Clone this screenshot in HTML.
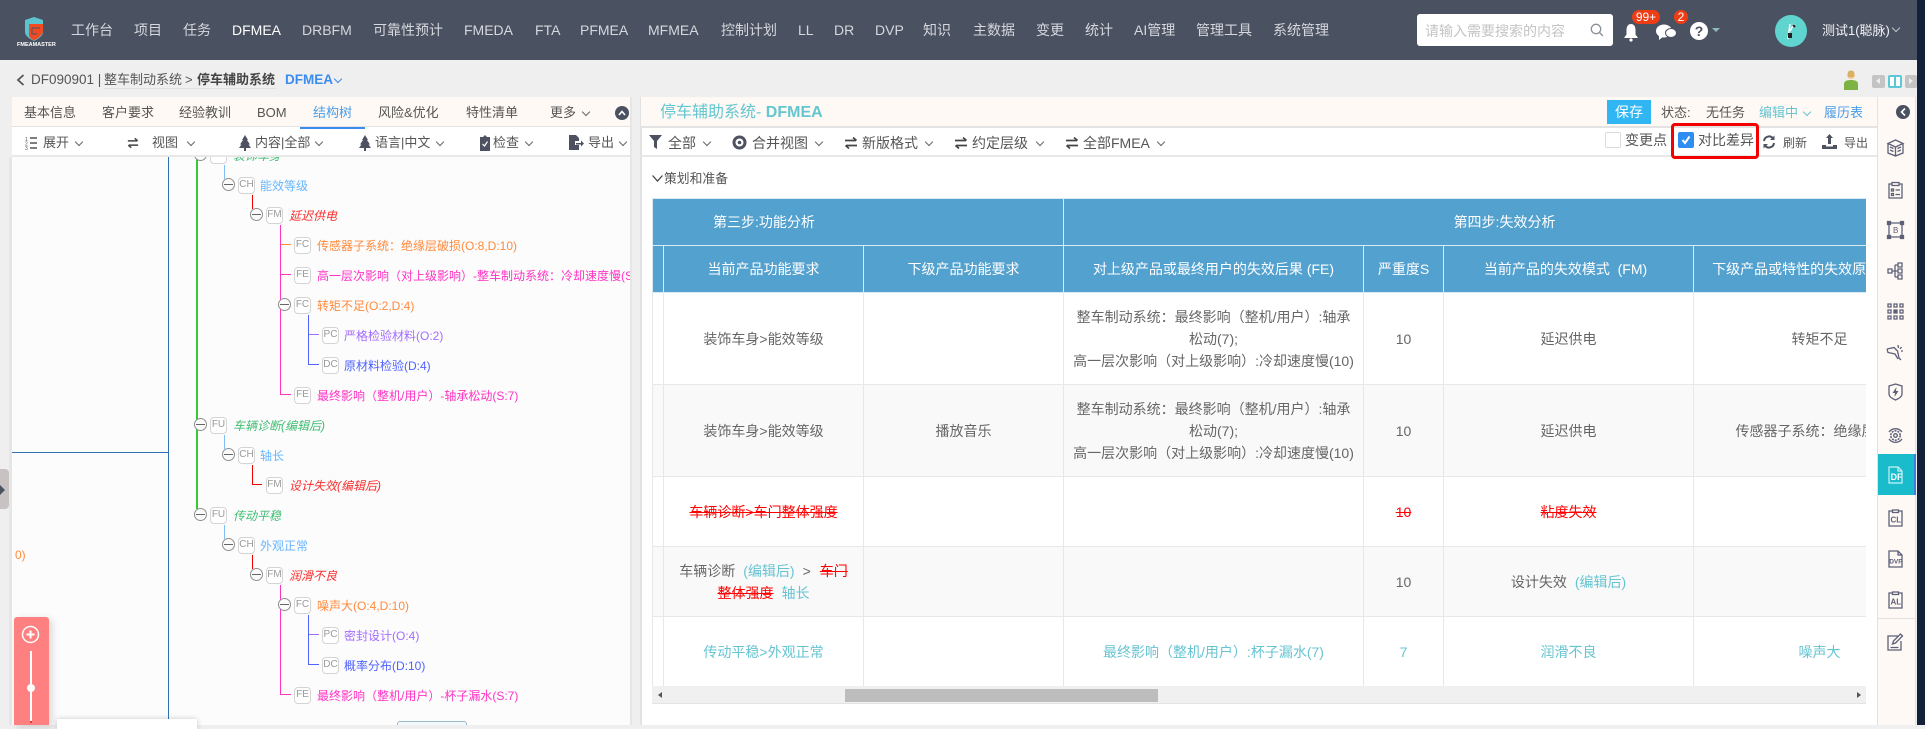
<!DOCTYPE html>
<html lang="zh-CN"><head><meta charset="utf-8"><title>DFMEA</title>
<style>
*{box-sizing:border-box}
html,body{margin:0;padding:0;width:1925px;height:725px;overflow:hidden;background:#efefef;font-family:"Liberation Sans","Noto Sans CJK SC",sans-serif;color:#555}
.a{position:absolute}
.t{position:absolute;white-space:nowrap;line-height:20px;font-size:13px}
.n{font-size:14px;color:#d5d8de;top:20px}
.ch{position:absolute;width:6px;height:6px;border-right:1px solid #666;border-bottom:1px solid #666;transform:rotate(45deg)}
svg{position:absolute;overflow:visible}
.b{position:absolute;width:17px;height:17px;margin-top:1px;border:1.5px solid #d4d4d4;border-radius:4px;background:#fff;font-size:10px;line-height:14px;text-align:center;color:#999}
.c{position:absolute;width:13px;height:13px;border:1.5px solid #8f8f8f;border-radius:50%;background:#fbfbfb}
.c:after{content:"";position:absolute;left:1px;right:1px;top:4.5px;height:1px;background:#666}
.l{position:absolute}
.x{font-size:12px}
.fu{color:#3fbd72;font-style:italic}.chh{color:#69b6ff}.fm{color:#fa2f2f;font-style:italic}.fc{color:#ff8a3c}.fe{color:#ff33c4}.pc{color:#a46cff}.dc{color:#4f62ff}
.tb{font-size:14px}
table{position:absolute;left:0;top:0;border-collapse:collapse;table-layout:fixed;width:1293px;font-size:14px;color:#666}
td,th{border:1px solid #e8e8e8;text-align:center;vertical-align:middle;padding:0;line-height:22px;font-weight:400;overflow:hidden;white-space:nowrap}
th{background:#53a1cf;color:#fff;border-color:#dbe9f2}
.z td{background:#f9f9f9}
.r{color:#f00;text-decoration:line-through}
.g{color:#66c4d2}
svg.ic{fill:none;stroke:#5d6078;stroke-width:1.3}
</style></head><body>
<svg width="0" height="0" style="position:absolute"><defs>
<symbol id="swap" viewBox="0 0 14 14"><path d="M1 4.500H12M9 1.500L12.500 4.500M13 9.500H2M5 12.500L1.500 9.500" fill="none" stroke="#444" stroke-width="1.700"/></symbol>
<symbol id="pine" viewBox="0 0 12 16"><path d="M6 0L9 5H8L11 9.500H9.500L12 13H7V16H5V13H0L2.500 9.500H1L4 5H3Z" fill="#4d5160"/></symbol>
</defs></svg>

<!-- header -->
<div class="a" style="left:0;top:0;width:1917px;height:60px;background:#4a5160"></div>
<div class="a" style="left:1917px;top:0;width:8px;height:725px;background:#13203a"></div>
<svg style="left:24px;top:17px" width="20" height="24" viewBox="0 0 20 24"><path d="M1 3L10 0L19 3V15C19 19 14 22 10 24C6 22 1 19 1 15Z" fill="#5dc3cf"/><path d="M5 7H19V14C19 18 14 21 10 23.500C8 22.500 6 21 5 19Z" fill="#ef4a22"/><path d="M8 11H16M8 11V17H13" fill="none" stroke="#4a5160" stroke-width="1"/></svg>
<svg style="left:17px;top:40px" width="34" height="7"><text x="0" y="6" font-size="5.500" font-weight="700" fill="#fff" font-family="Liberation Sans">FMEAMASTER</text></svg>
<div class="t n" style="left:71px">工作台</div><div class="t n" style="left:134px">项目</div><div class="t n" style="left:183px">任务</div>
<div class="t n" style="left:232px;color:#fff">DFMEA</div><div class="t n" style="left:302px">DRBFM</div><div class="t n" style="left:373px">可靠性预计</div>
<div class="t n" style="left:464px">FMEDA</div><div class="t n" style="left:535px">FTA</div><div class="t n" style="left:580px">PFMEA</div><div class="t n" style="left:648px">MFMEA</div>
<div class="t n" style="left:721px">控制计划</div><div class="t n" style="left:798px">LL</div><div class="t n" style="left:834px">DR</div><div class="t n" style="left:875px">DVP</div>
<div class="t n" style="left:923px">知识</div><div class="t n" style="left:973px">主数据</div><div class="t n" style="left:1036px">变更</div><div class="t n" style="left:1085px">统计</div>
<div class="t n" style="left:1134px">AI管理</div><div class="t n" style="left:1196px">管理工具</div><div class="t n" style="left:1273px">系统管理</div>

<div class="a" style="left:1417px;top:14px;width:196px;height:32px;background:#fff;border-radius:3px"></div>
<div class="t" style="left:1425px;top:21px;font-size:14px;color:#c4c4c4">请输入需要搜索的内容</div>
<svg style="left:1590px;top:23px" width="14" height="14" viewBox="0 0 14 14" fill="none" stroke="#8a8f98" stroke-width="1.300"><circle cx="6" cy="6" r="4.700"/><path d="M9.500 9.500L13 13"/></svg>
<svg style="left:1623px;top:23px" width="16" height="19" viewBox="0 0 16 19"><path d="M8 1C11 1 12.500 3.500 12.500 7V11.500L15 15H1L3.500 11.500V7C3.500 3.500 5 1 8 1Z" fill="#fff"/><circle cx="8" cy="17" r="1.600" fill="#fff"/></svg>
<div class="a" style="left:1632px;top:10px;width:28px;height:14px;border-radius:7px;background:#ee3c14;color:#fff;font-size:12px;line-height:14px;text-align:center">99+</div>
<svg style="left:1656px;top:24px" width="21" height="16" viewBox="0 0 21 16"><ellipse cx="8" cy="7" rx="8" ry="6.500" fill="#fff"/><path d="M3 11L3 16L8 12Z" fill="#fff"/><ellipse cx="15" cy="9" rx="5.500" ry="4.500" fill="#fff" stroke="#4a5160"/></svg>
<div class="a" style="left:1674px;top:10px;width:14px;height:14px;border-radius:50%;background:#ee3c14;color:#fff;font-size:12px;line-height:14px;text-align:center">2</div>
<div class="a" style="left:1690px;top:22px;width:18px;height:18px;border-radius:50%;background:#fff;color:#4a5160;font-size:14px;font-weight:700;line-height:18px;text-align:center">?</div>
<div class="a" style="left:1712px;top:28px;border-left:4px solid transparent;border-right:4px solid transparent;border-top:4px solid #8fb9bf"></div>
<div class="a" style="left:1775px;top:15px;width:32px;height:32px;border-radius:50%;background:#60d5d0"></div>
<svg style="left:1785px;top:21px" width="12" height="20" viewBox="0 0 12 20"><path d="M5 3L3 18M9 3L5 10" stroke="#fff" stroke-width="1.500"/><path d="M3 12H7V17H3Z" fill="#222"/><path d="M8 4L10 6" stroke="#222" stroke-width="2"/></svg>
<div class="t" style="left:1822px;top:21px;color:#f2f4f7">测试1(聪脉)</div>
<div class="ch" style="left:1893px;top:25px;border-color:#b7c9cf"></div>

<!-- breadcrumb -->
<svg style="left:16px;top:74px" width="9" height="12" viewBox="0 0 9 12" fill="none" stroke="#555" stroke-width="1.800"><path d="M7.500 1L2 6L7.500 11"/></svg>
<div class="t" style="left:31px;top:70px;font-size:13.500px">DF090901 |</div>
<div class="t" style="left:104px;top:70px">整车制动系统</div>
<div class="a" style="left:104px;top:88px;width:172px;height:1px;background:#e0e0e0"></div>
<div class="t" style="left:185px;top:70px">&gt;</div>
<div class="t" style="left:197px;top:70px;font-weight:700;color:#444">停车辅助系统</div>
<div class="t" style="left:285px;top:70px;font-weight:700;color:#3b8cf0;font-size:13.500px">DFMEA</div>
<div class="ch" style="left:335px;top:76px;border-color:#3b8cf0"></div>
<svg style="left:1843px;top:70px" width="16" height="20" viewBox="0 0 16 20"><circle cx="8" cy="5" r="4" fill="#f2c98a"/><path d="M5 2C6 0 10 0 11 2L11 7L5 7Z" fill="#d9b066"/><path d="M1 20V14C1 11 4 10 8 10C12 10 15 11 15 14V20Z" fill="#7cb342"/></svg>
<div class="a" style="left:1872px;top:75px;width:13px;height:13px;background:#c4c4c4;border-radius:2px"></div>
<div class="a" style="left:1876px;top:78px;border-right:4px solid #eee;border-top:3.500px solid transparent;border-bottom:3.500px solid transparent"></div>
<div class="a" style="left:1888px;top:75px;width:14px;height:13px;background:#5cc8d6;border-radius:2px;padding:2px"><div style="width:4px;height:9px;background:#fff;float:left"></div><div style="width:4px;height:9px;background:#fff;float:right"></div></div>
<div class="a" style="left:1905px;top:75px;width:12px;height:13px;background:#c4c4c4;border-radius:2px"></div>
<div class="a" style="left:1909px;top:78px;border-left:4px solid #eee;border-top:3.500px solid transparent;border-bottom:3.500px solid transparent"></div>

<!-- left panel -->
<div class="a" style="left:9px;top:157px;width:3px;height:568px;background:#e6e6e6"></div>
<div class="a" style="left:630px;top:97px;width:2px;height:628px;background:#e6e6e6"></div>
<div class="a" style="left:12px;top:97px;width:618px;height:628px;background:#fcfcfc"></div>
<div class="a" style="left:12px;top:97px;width:618px;height:30px;background:#fef9f4;border-bottom:1px solid #e3e3e3"></div>
<div class="a" style="left:12px;top:127px;width:618px;height:30px;background:#fff;border-bottom:2px solid #e8e8e8"></div>
<div class="t" style="left:24px;top:103px">基本信息</div><div class="t" style="left:102px;top:103px">客户要求</div><div class="t" style="left:179px;top:103px">经验教训</div>
<div class="t" style="left:257px;top:103px">BOM</div><div class="t" style="left:313px;top:103px;color:#4a9be8">结构树</div>
<div class="a" style="left:300px;top:127px;width:65px;height:2px;background:#3b8cf0"></div>
<div class="t" style="left:378px;top:103px">风险&amp;优化</div><div class="t" style="left:466px;top:103px">特性清单</div><div class="t" style="left:550px;top:103px">更多</div>
<div class="ch" style="left:583px;top:109px"></div>
<div class="a" style="left:615px;top:106px;width:14px;height:14px;border-radius:50%;background:#4a5160"></div>
<svg style="left:618px;top:110px" width="8" height="6" viewBox="0 0 8 6" fill="none" stroke="#fff" stroke-width="1.600"><path d="M1 5L4 1.500L7 5"/></svg>

<svg style="left:25px;top:136px" width="12" height="14" viewBox="0 0 12 14"><path d="M5 2H12M5 7H12M5 12H12" stroke="#555" stroke-width="1.500"/><text x="0" y="5" font-size="5" fill="#555" font-family="Liberation Sans">1</text><text x="0" y="9.500" font-size="5" fill="#555" font-family="Liberation Sans">2</text><text x="0" y="14" font-size="5" fill="#555" font-family="Liberation Sans">3</text></svg>
<div class="t" style="left:43px;top:133px">展开</div><div class="ch" style="left:76px;top:139px"></div>
<svg style="left:127px;top:137px" width="12" height="12"><use href="#swap"/></svg>
<div class="t" style="left:152px;top:133px">视图</div><div class="ch" style="left:188px;top:139px"></div>
<svg style="left:239px;top:135px" width="12" height="16"><use href="#pine"/></svg>
<div class="t" style="left:255px;top:133px">内容|全部</div><div class="ch" style="left:316px;top:139px"></div>
<svg style="left:359px;top:135px" width="12" height="16"><use href="#pine"/></svg>
<div class="t" style="left:375px;top:133px">语言|中文</div><div class="ch" style="left:437px;top:139px"></div>
<svg style="left:480px;top:135px" width="10" height="16" viewBox="0 0 10 16"><path d="M0 2H3L5 0L7 2H10V16H0Z" fill="#4d5160"/><path d="M2.500 9L4.500 11L7.500 6.500" fill="none" stroke="#fff" stroke-width="1.200"/></svg>
<div class="t" style="left:493px;top:133px">检查</div><div class="ch" style="left:526px;top:139px"></div>
<svg style="left:569px;top:135px" width="15" height="15" viewBox="0 0 15 15"><path d="M0 0H7L10 3V6H6V10H10V15H0Z" fill="#4d5160"/><path d="M7 8H12V5.500L15 8.500L12 11.500V9.500H7Z" fill="#4d5160"/></svg>
<div class="t" style="left:588px;top:133px">导出</div><div class="ch" style="left:620px;top:139px"></div>

<!-- tree -->
<div class="a" style="left:12px;top:157px;width:618px;height:568px;overflow:hidden"><div class="a" style="left:-12px;top:-157px;width:640px;height:725px">
<div class="l" style="left:168px;top:157px;width:1px;height:568px;background:#2f72b5"></div>
<div class="l" style="left:12px;top:452px;width:156px;height:1px;background:#2f72b5"></div>
<div class="l" style="left:196px;top:157px;width:2px;height:352px;background:#33cc33"></div>

<div class="l" style="left:224px;top:165px;width:1px;height:14px;background:#7fbff5"></div>
<div class="l" style="left:252px;top:195px;width:1px;height:14px;background:#e00"></div>
<div class="l" style="left:280px;top:225px;width:1px;height:170px;background:#ff33c4"></div>
<div class="l" style="left:281px;top:244px;width:10px;height:1px;background:#ff8a3c"></div>
<div class="l" style="left:281px;top:274px;width:10px;height:1px;background:#ff33c4"></div>
<div class="l" style="left:281px;top:394px;width:10px;height:1px;background:#ff33c4"></div>
<div class="l" style="left:308px;top:315px;width:1px;height:50px;background:#4f62ff"></div>
<div class="l" style="left:309px;top:334px;width:10px;height:1px;background:#a46cff"></div>
<div class="l" style="left:309px;top:364px;width:10px;height:1px;background:#4f62ff"></div>

<div class="l" style="left:224px;top:435px;width:1px;height:14px;background:#7fbff5"></div>
<div class="l" style="left:252px;top:465px;width:1px;height:20px;background:#e00"></div>
<div class="l" style="left:252px;top:484px;width:10px;height:1px;background:#e00"></div>

<div class="l" style="left:224px;top:525px;width:1px;height:14px;background:#7fbff5"></div>
<div class="l" style="left:252px;top:555px;width:1px;height:14px;background:#e00"></div>
<div class="l" style="left:280px;top:585px;width:1px;height:110px;background:#ff33c4"></div>
<div class="l" style="left:281px;top:694px;width:10px;height:1px;background:#ff33c4"></div>
<div class="l" style="left:308px;top:615px;width:1px;height:50px;background:#4f62ff"></div>
<div class="l" style="left:309px;top:634px;width:10px;height:1px;background:#a46cff"></div>
<div class="l" style="left:309px;top:664px;width:10px;height:1px;background:#4f62ff"></div>

<div class="c" style="left:194px;top:148px"></div><div class="b" style="left:210px;top:146px">FU</div><div class="t x fu" style="left:233px;top:146px">装饰车身</div>
<div class="c" style="left:222px;top:178px"></div><div class="b" style="left:238px;top:176px">CH</div><div class="t x chh" style="left:260px;top:176px">能效等级</div>
<div class="c" style="left:250px;top:208px"></div><div class="b" style="left:266px;top:206px">FM</div><div class="t x fm" style="left:289px;top:206px">延迟供电</div>
<div class="b" style="left:294px;top:236px">FC</div><div class="t x fc" style="left:317px;top:236px">传感器子系统：绝缘层破损(O:8,D:10)</div>
<div class="b" style="left:294px;top:266px">FE</div><div class="t x fe" style="left:317px;top:266px">高一层次影响（对上级影响）-整车制动系统：冷却速度慢(S:7)</div>
<div class="c" style="left:278px;top:298px"></div><div class="b" style="left:294px;top:296px">FC</div><div class="t x fc" style="left:317px;top:296px">转矩不足(O:2,D:4)</div>
<div class="b" style="left:322px;top:326px">PC</div><div class="t x pc" style="left:344px;top:326px">严格检验材料(O:2)</div>
<div class="b" style="left:322px;top:356px">DC</div><div class="t x dc" style="left:344px;top:356px">原材料检验(D:4)</div>
<div class="b" style="left:294px;top:386px">FE</div><div class="t x fe" style="left:317px;top:386px">最终影响（整机/用户）-轴承松动(S:7)</div>

<div class="c" style="left:194px;top:418px"></div><div class="b" style="left:210px;top:416px">FU</div><div class="t x fu" style="left:233px;top:416px">车辆诊断(编辑后)</div>
<div class="c" style="left:222px;top:448px"></div><div class="b" style="left:238px;top:446px">CH</div><div class="t x chh" style="left:260px;top:446px">轴长</div>
<div class="b" style="left:266px;top:476px">FM</div><div class="t x fm" style="left:289px;top:476px">设计失效(编辑后)</div>

<div class="c" style="left:194px;top:508px"></div><div class="b" style="left:210px;top:506px">FU</div><div class="t x fu" style="left:233px;top:506px">传动平稳</div>
<div class="c" style="left:222px;top:538px"></div><div class="b" style="left:238px;top:536px">CH</div><div class="t x chh" style="left:260px;top:536px">外观正常</div>
<div class="c" style="left:250px;top:568px"></div><div class="b" style="left:266px;top:566px">FM</div><div class="t x fm" style="left:289px;top:566px">润滑不良</div>
<div class="c" style="left:278px;top:598px"></div><div class="b" style="left:294px;top:596px">FC</div><div class="t x fc" style="left:317px;top:596px">噪声大(O:4,D:10)</div>
<div class="b" style="left:322px;top:626px">PC</div><div class="t x pc" style="left:344px;top:626px">密封设计(O:4)</div>
<div class="b" style="left:322px;top:656px">DC</div><div class="t x dc" style="left:344px;top:656px">概率分布(D:10)</div>
<div class="b" style="left:294px;top:686px">FE</div><div class="t x fe" style="left:317px;top:686px">最终影响（整机/用户）-杯子漏水(S:7)</div>

<div class="t x fc" style="left:15px;top:545px">0)</div>
<div class="a" style="left:397px;top:721px;width:70px;height:10px;background:#f3f8fb;border:1px solid #9cb8cc;border-radius:3px"></div>
</div></div>

<div class="a" style="left:57px;top:719px;width:140px;height:10px;background:#fff;box-shadow:0 0 6px rgba(0,0,0,.2)"></div>
<div class="a" style="left:0;top:469px;width:9px;height:40px;background:#c9c2c2;border-radius:0 4px 4px 0"></div>
<div class="a" style="left:0;top:485px;border-left:5px solid #4a5160;border-top:5px solid transparent;border-bottom:5px solid transparent"></div>
<div class="a" style="left:14px;top:617px;width:35px;height:108px;background:#fe8080;border-radius:3px 3px 0 0;box-shadow:3px 2px 8px rgba(0,0,0,.15)"></div>
<svg style="left:21px;top:625px" width="19" height="19" viewBox="0 0 19 19"><circle cx="9.500" cy="9.500" r="8" fill="none" stroke="#fff" stroke-width="1.500"/><path d="M5.500 9.500H13.500M9.500 5.500V13.500" stroke="#fff" stroke-width="2"/></svg>
<div class="a" style="left:30px;top:651px;width:1.500px;height:70px;background:#fff"></div>
<div class="a" style="left:30px;top:721px;width:1.500px;height:2px;background:#e33"></div>
<div class="a" style="left:27px;top:684px;width:8px;height:8px;border-radius:50%;background:#fff"></div>

<!-- right panel -->
<div class="a" style="left:640px;top:97px;width:1237px;height:628px;background:#fff;border-left:2px solid #e2e2e2"></div>
<div class="a" style="left:641px;top:97px;width:1236px;height:30px;background:#fef9f4;border-bottom:1px solid #e3e3e3"></div>
<div class="a" style="left:641px;top:155px;width:1236px;height:2px;background:#e8e8e8"></div>
<div class="a" style="left:641px;top:127px;width:1236px;height:1px;background:#e3e3e3"></div>
<div class="t" style="left:660px;top:103px;font-size:16px;color:#64c6d0">停车辅助系统- <b>DFMEA</b></div>
<div class="a" style="left:1607px;top:100px;width:44px;height:24px;background:#2fb6f3;color:#fff;font-size:14px;line-height:24px;text-align:center">保存</div>
<div class="t" style="left:1661px;top:103px">状态:</div><div class="t" style="left:1706px;top:103px">无任务</div>
<div class="t" style="left:1759px;top:103px;color:#66c4d2">编辑中</div><div class="ch" style="left:1804px;top:109px;border-color:#66c4d2"></div>
<div class="t" style="left:1824px;top:103px;color:#4a9be8">履历表</div>

<svg style="left:649px;top:135px" width="13" height="14" viewBox="0 0 13 14"><path d="M0 0H13L8 6V14L5 12V6Z" fill="#4d5160"/></svg>
<div class="t tb" style="left:668px;top:133px">全部</div><div class="ch" style="left:704px;top:139px"></div>
<svg style="left:732px;top:135px" width="15" height="15" viewBox="0 0 15 15"><circle cx="7.500" cy="7.500" r="5.500" fill="none" stroke="#4d5160" stroke-width="3"/><circle cx="7.500" cy="7.500" r="1.800" fill="#4d5160"/></svg>
<div class="t tb" style="left:752px;top:133px">合并视图</div><div class="ch" style="left:816px;top:139px"></div>
<svg style="left:844px;top:136px" width="14" height="14"><use href="#swap"/></svg>
<div class="t tb" style="left:862px;top:133px">新版格式</div><div class="ch" style="left:926px;top:139px"></div>
<svg style="left:954px;top:136px" width="14" height="14"><use href="#swap"/></svg>
<div class="t tb" style="left:972px;top:133px">约定层级</div><div class="ch" style="left:1037px;top:139px"></div>
<svg style="left:1065px;top:136px" width="14" height="14"><use href="#swap"/></svg>
<div class="t tb" style="left:1083px;top:133px">全部FMEA</div><div class="ch" style="left:1158px;top:139px"></div>

<div class="a" style="left:1605px;top:132px;width:16px;height:16px;background:#fff;border:1px solid #dcdcdc;border-radius:2px"></div>
<div class="t" style="left:1625px;top:130px;font-size:14px">变更点</div>
<div class="a" style="left:1678px;top:132px;width:16px;height:16px;background:#2f8cf0;border-radius:2px"></div>
<svg style="left:1681px;top:135px" width="10" height="10" viewBox="0 0 10 10" fill="none" stroke="#fff" stroke-width="2"><path d="M1.500 5L4 8L8.500 1.500"/></svg>
<div class="t" style="left:1698px;top:130px;font-size:14px">对比差异</div>
<div class="a" style="left:1671px;top:123px;width:88px;height:36px;border:3px solid #f30000;border-radius:4px"></div>
<svg style="left:1762px;top:135px" width="14" height="14" viewBox="0 0 14 14" fill="none" stroke="#4d5160" stroke-width="2"><path d="M2 6A5 5 0 0 1 11 3.500M12 8A5 5 0 0 1 3 10.500"/><path d="M12.500 0.500V5H8Z" fill="#4d5160" stroke="none"/><path d="M1.500 13.500V9H6Z" fill="#4d5160" stroke="none"/></svg>
<div class="t" style="left:1783px;top:133px;font-size:12px">刷新</div>
<svg style="left:1822px;top:134px" width="15" height="15" viewBox="0 0 15 15"><path d="M7.500 0L11 4H9V10H6V4H4Z" fill="#4d5160"/><path d="M0 11H4V12.500H11V11H15V15H0Z" fill="#4d5160"/></svg>
<div class="t" style="left:1844px;top:133px;font-size:12px">导出</div>

<svg style="left:652px;top:175px" width="11" height="7" viewBox="0 0 11 7" fill="none" stroke="#444" stroke-width="1.300"><path d="M0.500 0.500L5.500 6L10.500 0.500"/></svg>
<div class="t" style="left:664px;top:169px;font-size:12.800px">策划和准备</div>

<!-- table -->
<div class="a" style="left:652px;top:198px;width:1214px;height:488px;overflow:hidden">
<table>
<colgroup><col style="width:11px"><col style="width:200px"><col style="width:200px"><col style="width:300px"><col style="width:80px"><col style="width:250px"><col style="width:252px"></colgroup>
<tr style="height:47px"><th colspan="3" style="text-align:left;padding-left:60px">第三步:功能分析</th><th colspan="4">第四步:失效分析</th></tr>
<tr style="height:47px"><th></th><th>当前产品功能要求</th><th>下级产品功能要求</th><th>对上级产品或最终用户的失效后果&nbsp;(FE)</th><th>严重度S</th><th style="padding-right:6px">当前产品的失效模式&nbsp;&nbsp;(FM)</th><th>下级产品或特性的失效原因（FC）</th></tr>
<tr style="height:92px"><td></td><td>装饰车身&gt;能效等级</td><td></td><td>整车制动系统：最终影响（整机/用户）:轴承<br>松动(7);<br>高一层次影响（对上级影响）:冷却速度慢(10)</td><td>10</td><td>延迟供电</td><td>转矩不足</td></tr>
<tr class="z" style="height:92px"><td></td><td>装饰车身&gt;能效等级</td><td>播放音乐</td><td>整车制动系统：最终影响（整机/用户）:轴承<br>松动(7);<br>高一层次影响（对上级影响）:冷却速度慢(10)</td><td>10</td><td>延迟供电</td><td>传感器子系统：绝缘层破损</td></tr>
<tr style="height:70px"><td></td><td><span class="r">车辆诊断&gt;车门整体强度</span></td><td></td><td></td><td><span class="r">10</span></td><td><span class="r">粘度失效</span></td><td></td></tr>
<tr class="z" style="height:70px"><td></td><td>车辆诊断<span class="g" style="margin:0 8px">(编辑后)</span>&gt;<span class="r" style="margin-left:9px">车门</span><br><span class="r">整体强度</span><span class="g" style="margin-left:8px">轴长</span></td><td></td><td></td><td>10</td><td>设计失效<span class="g" style="margin-left:8px">(编辑后)</span></td><td></td></tr>
<tr style="height:70px" class="g"><td></td><td class="g">传动平稳&gt;外观正常</td><td></td><td class="g">最终影响（整机/用户）:杯子漏水(7)</td><td class="g">7</td><td class="g">润滑不良</td><td class="g">噪声大</td></tr>
</table></div>
<div class="a" style="left:652px;top:686px;width:1214px;height:18px;background:#f0f0f0;border-bottom:1px solid #e4e4e4"></div>
<div class="a" style="left:845px;top:689px;width:313px;height:13px;background:#bdbdbd"></div>
<div class="a" style="left:658px;top:692px;border-right:4px solid #555;border-top:3.500px solid transparent;border-bottom:3.500px solid transparent"></div>
<div class="a" style="left:1857px;top:692px;border-left:4px solid #555;border-top:3.500px solid transparent;border-bottom:3.500px solid transparent"></div>

<!-- sidebar -->
<div class="a" style="left:1877px;top:97px;width:39px;height:628px;background:#fef9f4;border-left:1px solid #e2e2e2;border-right:1px solid #e2e2e2"></div>
<div class="a" style="left:1896px;top:105px;width:14px;height:14px;border-radius:50%;background:#4a5160"></div>
<svg style="left:1900px;top:108px" width="6" height="8" viewBox="0 0 6 8" fill="none" stroke="#fff" stroke-width="1.600"><path d="M5 0.500L1.500 4L5 7.500"/></svg>

<svg class="ic" style="left:1887px;top:139px" width="17" height="18" viewBox="0 0 17 18"><path d="M8.500 1L16 4.500L8.500 8L1 4.500ZM1 4.500V14L8.500 17L16 14V4.500M8.500 8V17M3 8L6.500 9.500M3 11L6.500 12.500M14 8L10.500 9.500M14 11L10.500 12.500"/></svg>
<svg class="ic" style="left:1888px;top:181px" width="15" height="18" viewBox="0 0 15 18"><path d="M4 3H1V17H14V3H11M4 1.500H11V4.500H4ZM3.500 8H5.500V10H3.500ZM3.500 12.500H5.500V14.500H3.500ZM7.500 9H12M7.500 13.500H12"/></svg>
<svg class="ic" style="left:1887px;top:221px" width="17" height="18" viewBox="0 0 17 18"><path d="M2 2H15V16H2Z"/><path d="M0.500 0.500H3.500V3.500H0.500ZM13.500 0.500H16.500V3.500H13.500ZM0.500 14.500H3.500V17.500H0.500ZM13.500 14.500H16.500V17.500H13.500Z" fill="#5d6078"/><text x="6" y="12" font-size="8" font-family="Liberation Sans" fill="#5d6078" stroke="none">B</text></svg>
<svg class="ic" style="left:1887px;top:262px" width="17" height="18" viewBox="0 0 17 18"><path d="M1 7H5V11H1ZM11 1H15V5H11ZM11 7H15V11H11ZM11 13H15V17H11ZM5 9H11M8 3H11M8 15H11M8 3V15"/></svg>
<svg class="ic" style="left:1887px;top:303px" width="17" height="17" viewBox="0 0 17 17" stroke-width="1.200"><path d="M1 1H4V4H1ZM7 1H10V4H7ZM13 1H16V4H13ZM1 7H4V10H1ZM13 7H16V10H13ZM1 13H4V16H1ZM7 13H10V16H7ZM13 13H16V16H13Z"/><path d="M7 7H10V10H7Z" fill="#5d6078"/></svg>
<svg class="ic" style="left:1886px;top:344px" width="18" height="18" viewBox="0 0 18 18"><path d="M1 5L8 3.500L11.500 7L13 14L15 16M1 5L2 8.500L9 10L12 15M12 1L12.500 4M15.500 3L14 5M17 7L15 7"/></svg>
<svg class="ic" style="left:1888px;top:383px" width="15" height="18" viewBox="0 0 15 18"><path d="M7.500 1L14 3V11C14 14 10 16 7.500 17C5 16 1 14 1 11V3Z"/><path d="M8.500 4L4.500 10H7L6.500 14L10.500 8H8Z" fill="#5d6078" stroke="none"/></svg>
<svg class="ic" style="left:1887px;top:427px" width="17" height="17" viewBox="0 0 17 17"><path d="M2 5A8 8 0 0 1 15 5M15 12A8 8 0 0 1 2 12"/><circle cx="8.500" cy="8.500" r="4.700" stroke-dasharray="2 1" stroke-width="1.600"/><circle cx="8.500" cy="8.500" r="1.800"/></svg>

<div class="a" style="left:1878px;top:454px;width:38px;height:41px;background:#1abccb;border-right:2px solid #3b7fe0"></div>
<svg style="left:1888px;top:466px" width="15" height="18" viewBox="0 0 15 18" fill="none" stroke="#c6f1f5" stroke-width="1.200"><path d="M1 1H10L14 5V17H1ZM10 1V5H14"/><text x="2.500" y="14" font-size="9" font-weight="700" font-family="Liberation Sans" fill="#fff" stroke="none">DF</text></svg>

<svg class="ic" style="left:1888px;top:509px" width="15" height="18" viewBox="0 0 15 18"><path d="M4 2H1V17H14V2H11M4.500 1H10.500V3.500H4.500Z"/><text x="2.500" y="13.500" font-size="8" font-weight="700" font-family="Liberation Sans" fill="#5d6078" stroke="none">CL</text></svg>
<svg class="ic" style="left:1888px;top:550px" width="15" height="18" viewBox="0 0 15 18"><path d="M1 1H10L14 5V17H1ZM10 1V5H14"/><text x="1.200" y="13.500" font-size="6.500" font-weight="700" font-family="Liberation Sans" fill="#5d6078" stroke="none">DVP</text></svg>
<svg class="ic" style="left:1888px;top:591px" width="15" height="18" viewBox="0 0 15 18"><path d="M4 2H1V17H14V2H11M4.500 1H10.500V3.500H4.500Z"/><text x="2.500" y="13.500" font-size="8" font-weight="700" font-family="Liberation Sans" fill="#5d6078" stroke="none">AL</text></svg>
<div class="a" style="left:1878px;top:618px;width:37px;height:1px;background:#e2e2e2"></div>
<svg class="ic" style="left:1887px;top:633px" width="17" height="18" viewBox="0 0 17 18"><path d="M11 3H1V17H14V8M3.500 14.500H11.500M5.500 11L6.500 8L13.500 1L15.500 3L8.500 10Z"/></svg>
</body></html>
